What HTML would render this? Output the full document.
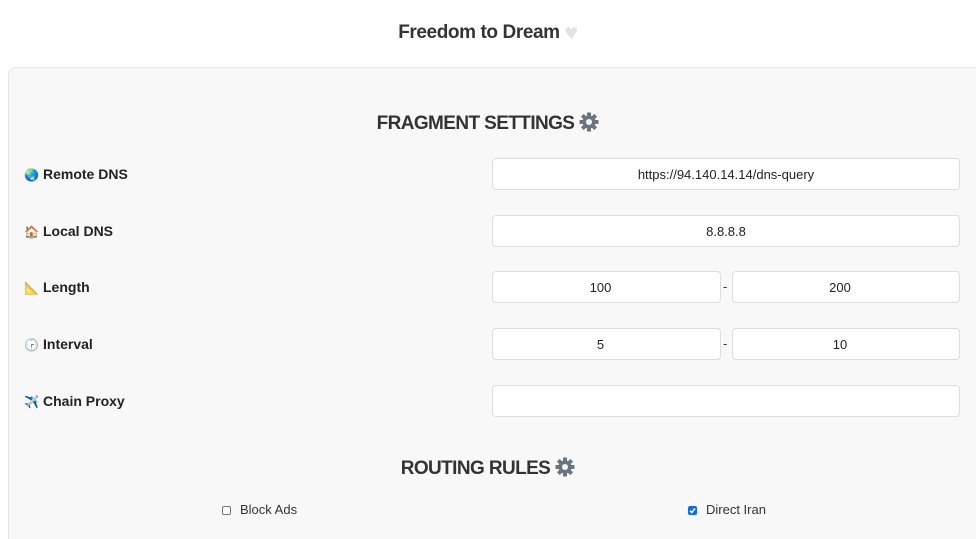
<!DOCTYPE html>
<html style="width:976px;height:539px;overflow:hidden"><head><meta charset="utf-8">
<style>
*{box-sizing:border-box}
body{margin:0;width:976px;height:539px;overflow:hidden;background:#fff;font-family:"Liberation Sans",sans-serif;color:#333;position:relative}
h1{position:absolute;top:19px;left:0;width:976px;text-align:center;margin:0;font-size:19px;font-weight:bold;color:#333;letter-spacing:-0.4px}
.card{position:absolute;left:8px;top:67px;width:980px;height:472px;background:#f8f8f8;border:1px solid #e6e6e6;border-bottom:none;border-radius:8px 8px 0 0}
.h2{position:absolute;left:0;width:976px;text-align:center;font-size:19px;font-weight:bold;color:#333;letter-spacing:-0.6px}
.h2 svg{vertical-align:-3px;margin-left:5px}
.lbl{position:absolute;left:24px;font-size:14px;font-weight:bold;color:#222;line-height:16px}
.lbl span{display:inline-block;width:15px;font-size:12px;margin-right:4px}
.in{position:absolute;height:32px;background:#fff;border:1px solid #ddd;border-radius:4px;font-size:13px;text-align:center;line-height:31px;color:#222}
.sp{padding-right:12px}
.dash{position:absolute;left:723px;font-size:13px;color:#333}
.cb{position:absolute;top:503px;font-size:13px;color:#333;line-height:14px}
.box{display:inline-block;width:9px;height:9px;border:1px solid #767676;border-radius:2px;background:#fff;vertical-align:-1px;margin-right:9px}
.box.on{background:#0b6ee8;border-color:#0b6ee8;position:relative}
</style></head><body>
<h1>Freedom to Dream <span style="color:#e3e3e3;font-size:23px;vertical-align:-2px">&#9829;</span></h1>
<div class="card"></div>
<div class="h2" style="top:112px">FRAGMENT SETTINGS<svg width="20" height="20" viewBox="0 0 20 20"><g fill="#6b7580"><circle cx="10" cy="10" r="6.5"/><g id="t"><rect x="8" y="0.5" width="4" height="4" rx="0.5"/><rect x="8" y="15.5" width="4" height="4" rx="0.5"/></g><use href="#t" transform="rotate(45 10 10)"/><use href="#t" transform="rotate(90 10 10)"/><use href="#t" transform="rotate(135 10 10)"/></g><circle cx="10" cy="10" r="3" fill="#f8f8f8"/></svg></div>
<div class="lbl" style="top:166px"><span>🌏</span>Remote DNS</div>
<div class="lbl" style="top:223px"><span>🏠</span>Local DNS</div>
<div class="lbl" style="top:279px"><span>📐</span>Length</div>
<div class="lbl" style="top:336px"><span>🕝</span>Interval</div>
<div class="lbl" style="top:393px"><span>✈️</span>Chain Proxy</div>
<div class="in" style="left:492px;top:158px;width:468px">https://94.140.14.14/dns-query</div>
<div class="in" style="left:492px;top:215px;width:468px">8.8.8.8</div>
<div class="in sp" style="left:492px;top:271px;width:229px">100</div><div class="dash" style="top:279px">-</div>
<div class="in sp" style="left:732px;top:271px;width:228px">200</div>
<div class="in sp" style="left:492px;top:328px;width:229px">5</div><div class="dash" style="top:336px">-</div>
<div class="in sp" style="left:732px;top:328px;width:228px">10</div>
<div class="in" style="left:492px;top:385px;width:468px"></div>
<div class="h2" style="top:457px">ROUTING RULES<svg width="20" height="20" viewBox="0 0 20 20"><g fill="#6b7580"><circle cx="10" cy="10" r="6.5"/><g id="t2"><rect x="8" y="0.5" width="4" height="4" rx="0.5"/><rect x="8" y="15.5" width="4" height="4" rx="0.5"/></g><use href="#t2" transform="rotate(45 10 10)"/><use href="#t2" transform="rotate(90 10 10)"/><use href="#t2" transform="rotate(135 10 10)"/></g><circle cx="10" cy="10" r="3" fill="#f8f8f8"/></svg></div>
<div class="cb" style="left:222px"><span class="box"></span>Block Ads</div>
<div class="cb" style="left:688px"><span class="box on"><svg width="9" height="9" viewBox="0 0 9 9" style="position:absolute;left:-1px;top:-1px"><path d="M2 4.8 L3.8 6.5 L7 2.5" stroke="#fff" stroke-width="1.5" fill="none"/></svg></span>Direct Iran</div>
</body></html>
